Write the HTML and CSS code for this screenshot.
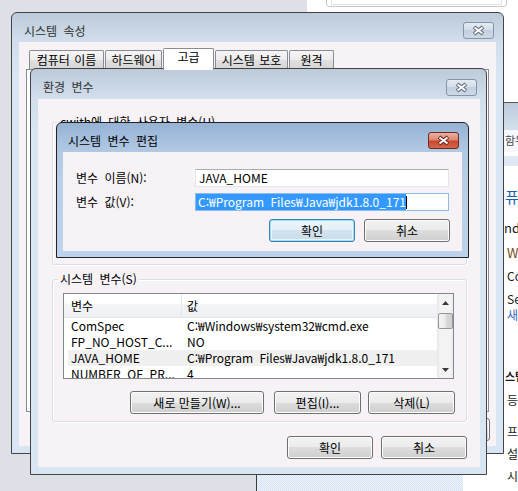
FILE: index.html
```html
<!DOCTYPE html>
<html lang="ko">
<head>
<meta charset="utf-8">
<title>시스템 속성 - 환경 변수</title>
<link rel="stylesheet" href="styles.css">
</head>
<body>
<div class="desk">
  <div class="bg-white"></div>
  <div class="searchbox"></div>

  <div class="cp">
    <div class="cp-head"></div>
    <div class="cp-crumb">함우</div>
    <div class="cp-band"></div>
    <div class="cp-lines">
      <div class="cp-line big">퓨터에 대한 기본 정보 보기</div>
      <div class="cp-line">ndows 버전</div>
      <div class="cp-line">Windows 7</div>
      <div class="cp-line">Copyright</div>
      <div class="cp-line">Service Pack 1</div>
      <div class="cp-line link">새 버전의 Windows</div>
      <div class="cp-line small">스템</div>
      <div class="cp-line">등급</div>
      <div class="cp-line">프로세서</div>
      <div class="cp-line">설치된 메모리</div>
      <div class="cp-line">시스템 종류</div>
    </div>
  </div>

  <div class="bg-dots"></div>

  <!-- 시스템 속성 -->
  <div class="win win-sys">
    <div class="titlebar">
      <span class="title">시스템 속성</span>
      <span class="close"><svg width="29" height="15" viewBox="0 0 29 15"><path d="M10 4 L19 11 M19 4 L10 11" stroke="#5d6878" stroke-width="4"/><path d="M10.5 4.5 L18.5 10.5 M18.5 4.5 L10.5 10.5" stroke="#fff" stroke-width="2"/></svg></span>
    </div>
    <div class="client sys-client">
      <div class="tabs">
        <div class="tab">컴퓨터 이름</div>
        <div class="tab">하드웨어</div>
        <div class="tab sel">고급</div>
        <div class="tab">시스템 보호</div>
        <div class="tab">원격</div>
      </div>
      <div class="tabpanel"></div>
      <div class="btnrow sys-btns">
        <button class="btn w75">확인</button>
        <button class="btn w75">취소</button>
        <button class="btn w75">적용(A)</button>
      </div>
    </div>
  </div>

  <!-- 환경 변수 -->
  <div class="win win-env">
    <div class="titlebar">
      <span class="title">환경 변수</span>
      <span class="close"><svg width="29" height="15" viewBox="0 0 29 15"><path d="M10 4 L19 11 M19 4 L10 11" stroke="#5d6878" stroke-width="4"/><path d="M10.5 4.5 L18.5 10.5 M18.5 4.5 L10.5 10.5" stroke="#fff" stroke-width="2"/></svg></span>
    </div>
    <div class="client env-client">
      <div class="group user-group">
        <span class="group-label">cwith에 대한 사용자 변수(U)</span>
      </div>
      <div class="group sys-group">
        <span class="group-label">시스템 변수(S)</span>
        <div class="listview">
          <div class="lv-body">
            <div class="lv-head"><span class="c1">변수</span><span class="c2">값</span></div>
            <div class="lv-row"><span class="c1">ComSpec</span><span class="c2">C:₩Windows₩system32₩cmd.exe</span></div>
            <div class="lv-row"><span class="c1">FP_NO_HOST_C...</span><span class="c2">NO</span></div>
            <div class="lv-row hl"><span class="c1">JAVA_HOME</span><span class="c2">C:₩Program Files₩Java₩jdk1.8.0_171</span></div>
            <div class="lv-row"><span class="c1">NUMBER_OF_PR...</span><span class="c2">4</span></div>
          </div>
          <div class="vscroll">
            <div class="sb-btn"><svg width="7" height="4" viewBox="0 0 7 4"><path d="M0 4 L3.5 0 L7 4 Z" fill="#3b3b3b"/></svg></div>
            <div class="sb-thumb"></div>
            <div class="sb-track"></div>
            <div class="sb-btn"><svg width="7" height="4" viewBox="0 0 7 4"><path d="M0 0 L7 0 L3.5 4 Z" fill="#3b3b3b"/></svg></div>
          </div>
        </div>
        <div class="btnrow lv-btns">
          <button class="btn w-new">새로 만들기(W)...</button>
          <button class="btn w-edit">편집(I)...</button>
          <button class="btn w-del">삭제(L)</button>
        </div>
      </div>
      <div class="btnrow dlg-btns">
        <button class="btn w86">확인</button>
        <button class="btn w86">취소</button>
      </div>
    </div>
  </div>

  <!-- 시스템 변수 편집 -->
  <div class="win win-edit">
    <div class="titlebar">
      <span class="title">시스템 변수 편집</span>
      <span class="close red"><svg width="29" height="15" viewBox="0 0 29 15"><path d="M10 4 L19 11 M19 4 L10 11" stroke="#6e2317" stroke-width="4"/><path d="M10.5 4.5 L18.5 10.5 M18.5 4.5 L10.5 10.5" stroke="#fff" stroke-width="2"/></svg></span>
    </div>
    <div class="client edit-client">
      <div class="field">
        <span class="lbl">변수 이름(N):</span>
        <span class="input">JAVA_HOME</span>
      </div>
      <div class="field">
        <span class="lbl">변수 값(V):</span>
        <span class="input focus"><span class="selected">C:₩Program Files₩Java₩jdk1.8.0_171</span><span class="caret"></span></span>
      </div>
      <div class="btnrow edit-btns">
        <button class="btn default w86">확인</button>
        <button class="btn w86">취소</button>
      </div>
    </div>
  </div>
</div>
</body>
</html>
```

FILE: styles.css
```css
* { box-sizing: border-box; }
html, body { margin: 0; padding: 0; }
body {
  width: 518px;
  height: 491px;
  overflow: hidden;
  background: #dfdfe7;
  font-family: "Noto Sans CJK KR", "Noto Sans", sans-serif;
  font-size: 12px;
  line-height: 16px;
  color: #000;
  word-spacing: 3px;
}
.desk { position: relative; width: 518px; height: 491px; overflow: hidden; }

/* background desktop pieces */
.bg-white { position: absolute; left: 307px; top: 0; right: 0; bottom: 0; background: #fff; }
.searchbox {
  position: absolute; left: 326px; top: -20px; width: 181px; height: 27px;
  border: 1px solid #c9c9c9; border-radius: 3px;
}
.searchbox::after {
  content: ""; position: absolute; left: 4px; right: 4px; top: 0; bottom: 1px;
  border: 1px solid #e2e2e2; border-top: 0;
}

.cp {
  position: absolute; left: 504px; top: 102px; width: 120px; bottom: 0;
  background: #fff; border-top: 1px solid #5a5a5a;
}
.cp-head { height: 27px; background: linear-gradient(#bccbdc, #d4e0ec); }
.cp-crumb { height: 22px; line-height: 20px; font-size: 11px; color: #4a4a4a; background: #f6f8fb; white-space: nowrap; padding-left: 1px; }
.cp-band { height: 10px; margin-top: 4px; background: #dee9f5; }
.cp-lines { display: flex; flex-direction: column; }
.cp-line { height: 16px; line-height: 16px; white-space: nowrap; padding-left: 3px; color: #1a1a1a; }
.cp-line.big { font-size: 15px; color: #1e5fb5; padding-left: 1px; margin-top: 23px; }
.cp-line:nth-child(2) { margin-top: 15px; padding-left: 0; font-size: 13px; }
.cp-line:nth-child(3) { margin-top: 9px; font-size: 13px; color: #7a4a14; }
.cp-line:nth-child(4) { margin-top: 7px; }
.cp-line:nth-child(5) { margin-top: 7px; }
.cp-line.link { margin-top: 0; color: #3366cc; }
.cp-line.small { margin-top: 45px; font-size: 11px; font-weight: bold; padding-left: 1px; }
.cp-line:nth-child(8) { margin-top: 8px; }
.cp-line:nth-child(9) { margin-top: 16px; }
.cp-line:nth-child(10) { margin-top: 6px; }
.cp-line:nth-child(11) { margin-top: 6px; }

.bg-dots {
  position: absolute; left: 256px; top: 440px; width: 207px; bottom: 0;
  border-left: 1px solid #3c3c3c;
  background: repeating-conic-gradient(#d6e4f3 0 25%, #ecf3fb 0 50%) 0 0 / 2px 2px;
}

/* windows */
.win {
  position: absolute;
  display: flex; flex-direction: column;
  border: 1px solid #444;
  border-radius: 6px 6px 0 0;
  padding: 0 7px 7px 7px;
  background: linear-gradient(#bccada 0, #d2deeb 29px, #d8e5f2 60px, #d8e5f2 100%);
}
.win-sys { left: 11px; top: 12px; width: 493px; height: 442px; }
.win-env { left: 30px; top: 68px; width: 457px; height: 407px; padding-right: 6px; }
.win-edit {
  left: 56px; top: 122px; width: 413px; height: 136px;
  padding: 0 6px 6px 6px;
  border-color: #222;
  background: linear-gradient(#96b3d5 0, #b2c9e3 29px, #b8cfe8 60px, #bcd3eb 100%);
}

.titlebar {
  flex: none; height: 29px;
  display: flex; align-items: center; justify-content: space-between;
  padding: 6px 2px 0 5px;
}
.win-env .titlebar { height: 30px; padding-right: 3px; }
.win-edit .titlebar { padding-right: 3px; }
.title { color: #333; line-height: 16px; }
.win-edit .title { color: #000; }

.close {
  width: 31px; height: 17px; display: flex;
  border: 1px solid #8594a7; border-radius: 3px;
  background: linear-gradient(#e4ebf3 0, #d2dce8 50%, #c3d0df 50%, #cdd9e6 100%);
}
.close.red {
  border-color: #6b2a20;
  background: linear-gradient(#eab0a3 0, #dc8570 48%, #c8472e 52%, #d5664c 100%);
}

.client { flex: 1; min-height: 0; display: flex; flex-direction: column; background: #f6f2f6; }

/* tabs */
.tabs { flex: none; height: 27px; display: flex; align-items: flex-end; gap: 1px; padding-left: 10px; }
.tab {
  height: 19px; border: 1px solid #898c95; border-bottom: 0; border-radius: 2px 2px 0 0;
  background: linear-gradient(#f5f5f5 0, #ececec 50%, #e0e0e0 51%, #d6d6d6 100%);
  text-align: center; line-height: 17px; white-space: nowrap; word-spacing: 1px;
}
.tab:nth-child(1) { width: 75px; }
.tab:nth-child(2) { width: 57px; }
.tab:nth-child(3) { width: 51px; }
.tab:nth-child(4) { width: 73px; }
.tab:nth-child(5) { width: 45px; }
.tab.sel { height: 22px; margin-bottom: -1px; background: #fff; position: relative; z-index: 1; line-height: 16px; }
.tabpanel { flex: none; height: 343px; margin: 0 7px; border: 1px solid #898c95; background: #fff; }

/* buttons */
.btnrow { display: flex; justify-content: flex-end; flex: none; }
.btn {
  font: inherit; color: #000; padding: 0; margin: 0;
  height: 23px; line-height: 21px; text-align: center; white-space: nowrap;
  border: 1px solid #707070; border-radius: 3px;
  background: linear-gradient(#f2f2f2 0, #ebebeb 50%, #dddddd 50%, #cfcfcf 100%);
  box-shadow: inset 0 0 0 1px #fcfcfc;
}
.btn.default {
  border-color: #3c7fb1;
  background: linear-gradient(#eef6fc 0, #e3eef7 50%, #d4e2ee 50%, #c9dbea 100%);
  box-shadow: inset 0 0 0 1px #9fe0f8, inset 0 0 0 2px #e6f6fd;
}
.w75 { width: 75px; }
.w86 { width: 86px; }
.sys-btns { margin-top: 6px; padding-right: 6px; gap: 6px; }

/* 환경 변수 */
.group {
  position: relative; flex: none;
  border: 1px solid #d5dfe5; border-radius: 3px;
  box-shadow: inset 1px 1px 0 #fff, 1px 1px 0 #fff;
  margin: 0 13px 0 14px;
}
.group-label {
  position: absolute; top: -9px; left: 5px; padding: 0 2px;
  background: #f6f2f6; line-height: 16px; white-space: nowrap;
}
.user-group { margin-top: 23px; height: 143px; }
.sys-group { margin-top: 14px; height: 143px; padding: 13px 11px 0 10px; }

.listview { width: 391px; height: 86px; border: 1px solid #828790; background: #fff; display: flex; }
.lv-body { flex: 1; min-width: 0; overflow: hidden; }
.lv-head {
  display: flex; height: 24px; line-height: 23px;
  background: linear-gradient(#fff 0, #fff 42%, #f4f5f7 42%, #eff1f4 100%);
  border-bottom: 1px solid #e3e6ea;
}
.lv-row { display: flex; height: 16px; line-height: 16px; white-space: nowrap; }
.c1 { flex: none; width: 118px; padding-left: 7px; white-space: nowrap; overflow: hidden; }
.c2 { padding-left: 5px; white-space: nowrap; }
.lv-head .c1 { border-right: 1px solid #e5e7ea; }
.lv-row.hl { background: #f0f0f0; margin-left: 4px; }
.lv-row.hl .c1 { width: 114px; padding-left: 3px; }

.vscroll {
  flex: none; width: 16px; display: flex; flex-direction: column;
  background: linear-gradient(90deg, #e6e6e6 0, #f3f3f3 3px, #f3f3f3 13px, #ececec 16px);
}
.sb-btn { height: 17px; display: flex; align-items: center; justify-content: center; flex: none; }
.sb-thumb {
  flex: none; height: 16px; margin: 2px 0 0 1px;
  border: 1px solid #959595; border-radius: 2px;
  background: linear-gradient(90deg, #f5f5f5 0, #e9e9e9 50%, #d9d9d9 51%, #d0d0d0 100%);
}
.sb-track { flex: 1; }

.lv-btns { margin-top: 12px; }
.w-new { width: 134px; margin-right: 10px; }
.w-edit { width: 87px; margin-right: 7px; }
.w-del { width: 87px; }
.dlg-btns { margin-top: 14px; padding-right: 13px; gap: 8px; }

/* 시스템 변수 편집 */
.edit-client { padding: 17px 13px 0 13px; }
.field { display: flex; align-items: center; height: 18px; }
.field + .field { margin-top: 6px; }
.lbl { flex: none; width: 119px; white-space: nowrap; }
.input {
  flex: none; width: 254px; height: 18px;
  display: flex; align-items: center;
  border: 1px solid #e2e6ec; border-top-color: #abadb3;
  background: #fff; padding-left: 3px; white-space: nowrap; overflow: hidden;
}
.input.focus { border-color: #8ebde9; padding-left: 0; }
.selected { background: #3399ff; color: #fff; height: 16px; line-height: 16px; padding-left: 2px; white-space: nowrap; }
.caret { flex: none; width: 1px; height: 13px; background: #000; }
.edit-btns { margin-top: 8px; gap: 9px; margin-right: -1px; }
```
